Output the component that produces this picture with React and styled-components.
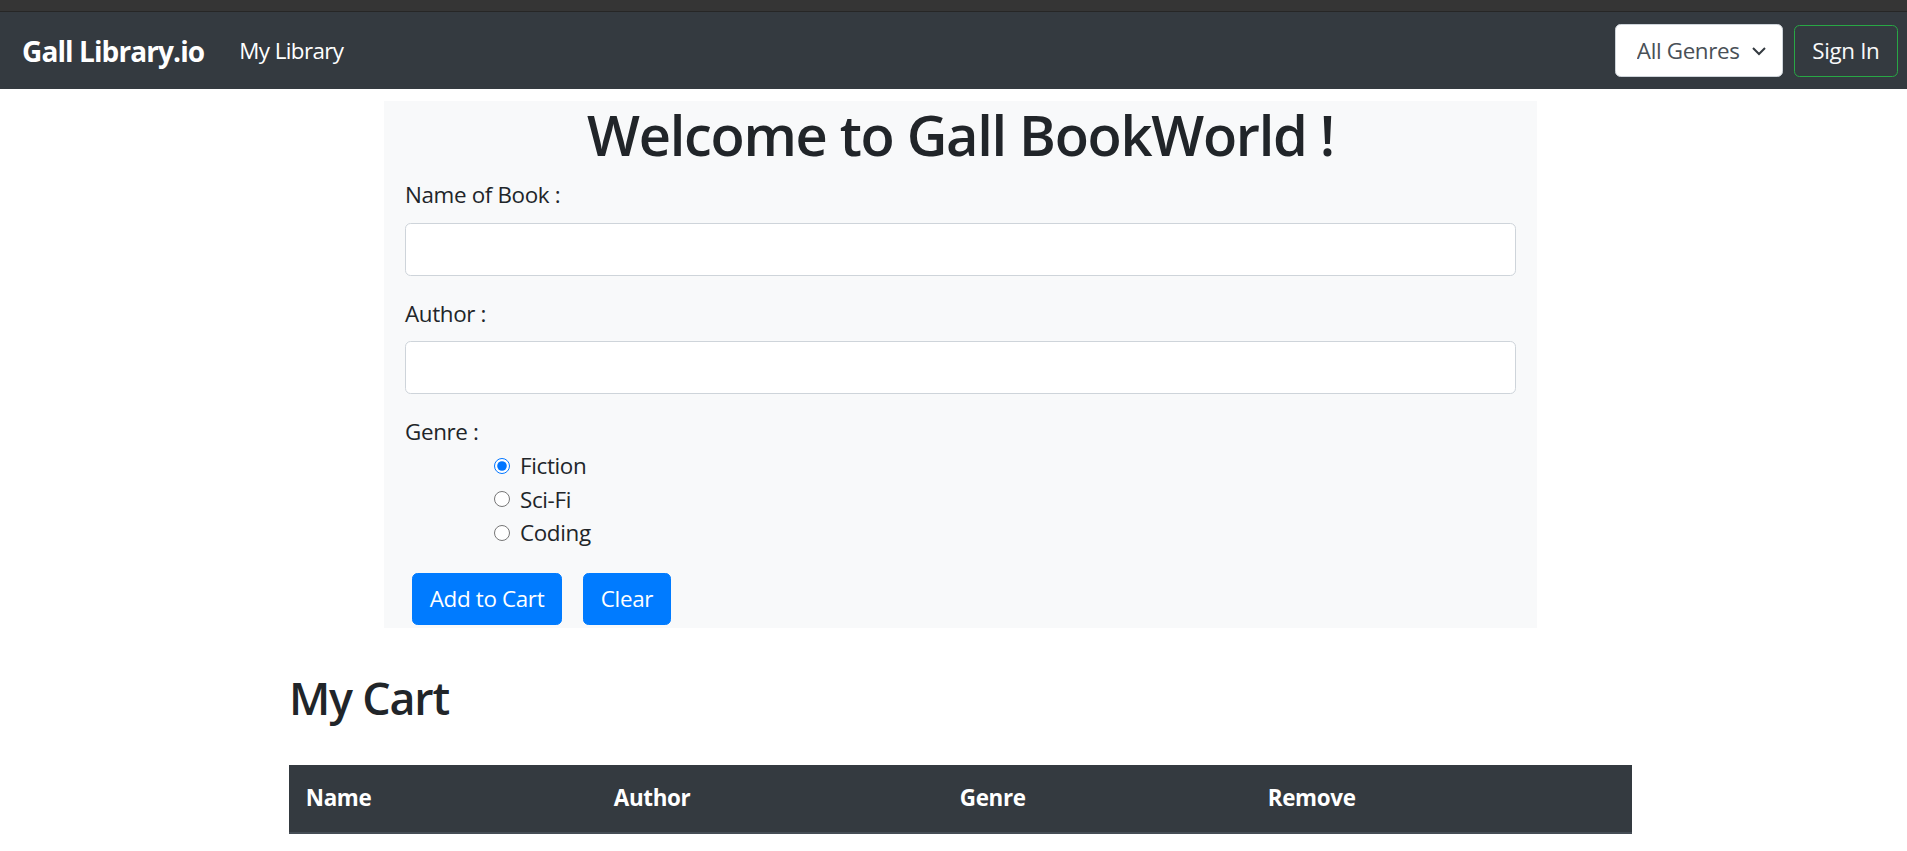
import React, { useState } from "react";
import styled, { createGlobalStyle } from "styled-components";

const GlobalStyle = createGlobalStyle`
  body {
    margin: 0;
    background: #fff;
    color: #212529;
    font-family: "Open Sans", "Noto Sans", sans-serif;
    font-size: 22.4px;
    line-height: 1.5;
    letter-spacing: -0.35px;
  }
  * { box-sizing: border-box; }
`;

const genres = ["Fiction", "Sci-Fi", "Coding"];

const App = () => {
  const [name, setName] = useState("");
  const [author, setAuthor] = useState("");
  const [genre, setGenre] = useState("Fiction");

  const clear = () => {
    setName("");
    setAuthor("");
    setGenre("Fiction");
  };

  return (
    <>
      <GlobalStyle />
      <TopStrip />
      <Navbar>
        <Brand>Gall Library.io</Brand>
        <NavLink>My Library</NavLink>
        <NavRight>
          <GenreSelect defaultValue="all">
            <option value="all">All Genres</option>
            <option value="fiction">Fiction</option>
            <option value="scifi">Sci-Fi</option>
            <option value="coding">Coding</option>
          </GenreSelect>
          <SignIn>Sign In</SignIn>
        </NavRight>
      </Navbar>

      <Main>
        <Panel>
          <Title>Welcome to Gall BookWorld !</Title>
          <Group>
            <Label>Name of Book :</Label>
            <Input value={name} onChange={(e) => setName(e.target.value)} />
          </Group>
          <Group>
            <Label>Author :</Label>
            <Input value={author} onChange={(e) => setAuthor(e.target.value)} />
          </Group>
          <Label>Genre :</Label>
          <RadioList>
            {genres.map((g) => (
              <RadioRow key={g}>
                <Radio
                  type="radio"
                  name="genre"
                  checked={genre === g}
                  onChange={() => setGenre(g)}
                />
                {g}
              </RadioRow>
            ))}
          </RadioList>
          <Actions>
            <Button>Add to Cart</Button>
            <Button onClick={clear}>Clear</Button>
          </Actions>
        </Panel>

        <Cart>
          <CartTitle>My Cart</CartTitle>
          <Table>
            <thead>
              <tr>
                <Th width={308}>Name</Th>
                <Th width={346}>Author</Th>
                <Th width={308}>Genre</Th>
                <Th>Remove</Th>
              </tr>
            </thead>
          </Table>
        </Cart>
      </Main>
    </>
  );
};

export default App;

const TopStrip = styled.div`
height: 12px;
background: #353535;
border-bottom: 1px solid #262626;
`

const Navbar = styled.nav`
display: flex;
align-items: center;
height: 77px;
padding: 0 9px 0 22px;
background: #343a40;
`

const Brand = styled.div`
font-size: 28px;
font-weight: 700;
letter-spacing: -0.9px;
color: #fff;
margin-right: 35px;
`

const NavLink = styled.div`
color: #fff;
font-size: 22.4px;
letter-spacing: -0.6px;
`

const NavRight = styled.div`
margin-left: auto;
display: flex;
align-items: center;
gap: 11px;
`

const GenreSelect = styled.select`
appearance: none;
width: 168px;
height: 53px;
padding: 0 40px 0 21px;
font-family: inherit;
font-size: 22.4px;
letter-spacing: -0.35px;
color: #495057;
background: #fff url("data:image/svg+xml,%3Csvg xmlns='http://www.w3.org/2000/svg' width='16' height='10' viewBox='0 0 16 10'%3E%3Cpath d='M2 2l6 6 6-6' fill='none' stroke='%23343a40' stroke-width='2'/%3E%3C/svg%3E") no-repeat right 15px center;
border: 1px solid #ced4da;
border-radius: 5.6px;
`

const SignIn = styled.button`
height: 52px;
padding: 0 17.5px;
font-family: inherit;
font-size: 22.4px;
letter-spacing: -0.35px;
color: #f8f9fa;
background: transparent;
border: 1.4px solid #28a745;
border-radius: 5.6px;
`

const Main = styled.main`
padding-left: 14px;
`

const Panel = styled.section`
width: 1153px;
margin: 12px auto 0;
padding: 0 21px 3px;
background: #f8f9fa;
`

const Title = styled.h1`
margin: 0 0 10px;
text-align: center;
font-size: 56px;
font-weight: 600;
letter-spacing: -1.3px;
line-height: 1.2;
`

const Group = styled.div`
margin-bottom: 21px;
`

const Label = styled.label`
display: block;
margin-bottom: 11px;
`

const Input = styled.input`
display: block;
width: 100%;
height: 53px;
padding: 8px 17px;
font-family: inherit;
font-size: 22.4px;
color: #495057;
background: #fff;
border: 1px solid #ced4da;
border-radius: 5.6px;
`

const RadioList = styled.div`
margin-top: -11px;
padding-left: 89px;
`

const RadioRow = styled.label`
display: flex;
align-items: center;
gap: 10px;
height: 33.6px;
`

const Radio = styled.input`
width: 16px;
height: 16px;
margin: 0;
accent-color: #0075ff;
`

const Actions = styled.div`
display: flex;
gap: 21px;
margin-top: 23px;
padding-left: 7px;
`

const Button = styled.button`
height: 52px;
padding: 0 16.8px;
font-family: inherit;
font-size: 22.4px;
letter-spacing: -0.35px;
color: #fff;
background: #007bff;
border: 1px solid #007bff;
border-radius: 5.6px;
`

const Cart = styled.section`
width: 1343px;
margin: 43px auto 0;
`

const CartTitle = styled.h2`
margin: 0 0 40px;
font-size: 44.8px;
font-weight: 600;
letter-spacing: -1.2px;
line-height: 1.2;
`

const Table = styled.table`
width: 100%;
border-collapse: collapse;
`

const Th = styled.th`
width: ${(p) => (p.width ? `${p.width}px` : "auto")};
padding: 16.8px;
text-align: left;
font-weight: 700;
color: #fff;
background: #343a40;
border-bottom: 2.8px solid #454d55;
`
